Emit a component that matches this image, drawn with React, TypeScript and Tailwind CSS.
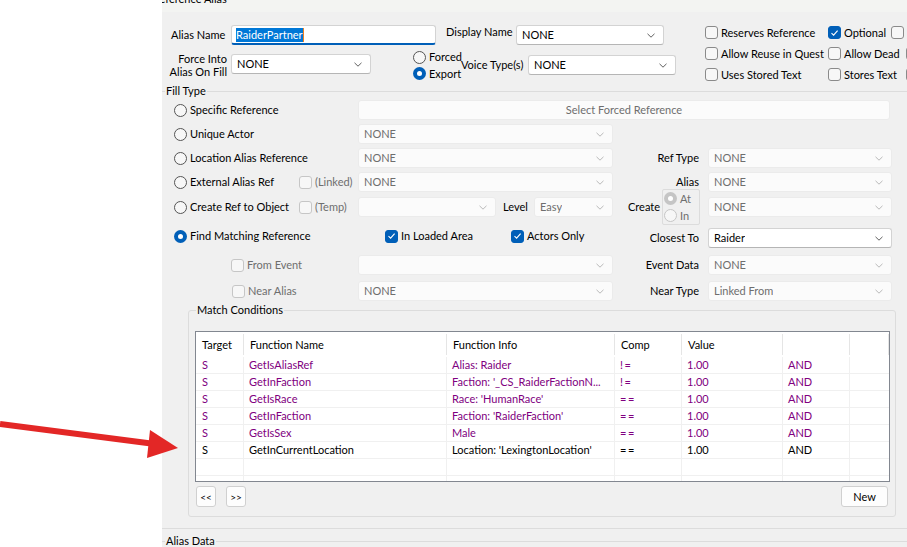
import React from "react";

const Chevron = ({ disabled }: { disabled?: boolean }) => (
  <svg width="8" height="5" viewBox="0 0 8 5" className="shrink-0">
    <path d="M0.5 0.8 L4 4.2 L7.5 0.8" fill="none" stroke={disabled ? "#b9b9b9" : "#606060"} strokeWidth="1" />
  </svg>
);

const Select = ({ value, w, active, h = "h-[20px]" }: { value: string; w: string; active?: boolean; h?: string }) => (
  <div
    className={`${w} ${h} shrink-0 flex items-center justify-between pl-[5px] pr-[8px] rounded-[3px] border ${
      active ? "bg-white border-[#d3d3d3] border-b-[#b5b5b5] text-black" : "bg-[#fbfbfb] border-[#ebebeb] text-[#6e6e6e]"
    }`}
  >
    <span className="truncate">{value}</span>
    <Chevron disabled={!active} />
  </div>
);

const Check = ({ checked, disabled, label }: { checked?: boolean; disabled?: boolean; label: string }) => (
  <div className="flex items-center gap-[3px] shrink-0">
    <div
      className={`w-[13px] h-[13px] shrink-0 rounded-[3px] flex items-center justify-center border ${
        checked ? "bg-[#005fb8] border-[#005fb8]" : disabled ? "bg-[#f7f7f7] border-[#c6c6c6]" : "bg-[#f7f7f7] border-[#8a8a8a]"
      }`}
    >
      {checked && (
        <svg width="9" height="8" viewBox="0 0 9 8">
          <path d="M1.5 4.2 L3.6 6.2 L7.6 1.6" fill="none" stroke="white" strokeWidth="1.1" />
        </svg>
      )}
    </div>
    <span className={`whitespace-nowrap ${disabled ? "text-[#6e6e6e]" : "text-black"}`}>{label}</span>
  </div>
);

const Radio = ({ selected, disabled, label }: { selected?: boolean; disabled?: boolean; label: string }) => (
  <div className="flex items-center gap-[3px] shrink-0">
    <div
      className={`w-[13px] h-[13px] shrink-0 rounded-full flex items-center justify-center ${
        selected
          ? disabled
            ? "bg-[#c5c5c5]"
            : "bg-[#005fb8]"
          : disabled
          ? "border border-[#c6c6c6] bg-[#f7f7f7]"
          : "border border-[#555] bg-[#f7f7f7]"
      }`}
    >
      {selected && <div className="w-[5px] h-[5px] rounded-full bg-white" />}
    </div>
    <span className={`whitespace-nowrap ${disabled ? "text-[#6e6e6e]" : "text-black"}`}>{label}</span>
  </div>
);

const RLabel = ({ text }: { text: string }) => (
  <div className="w-[95px] shrink-0 text-right pr-[9px] whitespace-nowrap">{text}</div>
);

const rows = [
  { t: "S", fn: "GetIsAliasRef", info: "Alias: Raider", comp: "!=", v: "1.00", op: "AND", p: true },
  { t: "S", fn: "GetInFaction", info: "Faction: '_CS_RaiderFactionN...", comp: "!=", v: "1.00", op: "AND", p: true },
  { t: "S", fn: "GetIsRace", info: "Race: 'HumanRace'", comp: "==", v: "1.00", op: "AND", p: true },
  { t: "S", fn: "GetInFaction", info: "Faction: 'RaiderFaction'", comp: "==", v: "1.00", op: "AND", p: true },
  { t: "S", fn: "GetIsSex", info: "Male", comp: "==", v: "1.00", op: "AND", p: true },
  { t: "S", fn: "GetInCurrentLocation", info: "Location: 'LexingtonLocation'", comp: "==", v: "1.00", op: "AND", p: false },
];

const cols = "grid grid-cols-[48px_203px_168px_67px_101px_67px_1fr]";

export default function App() {
  return (
    <div className="relative w-[907px] h-[547px] flex overflow-hidden font-['Lato',sans-serif] text-[11px] leading-[14px] text-black">
      <div className="w-[162px] shrink-0 bg-white" />
      <div className="w-[745px] shrink-0 bg-[#f0f0f0] flex flex-col overflow-hidden">
        {/* top cut title */}
        <div className="h-[12px] shrink-0 overflow-hidden bg-[#f3f4f2]">
          <div className="-mt-[8px] -ml-[9px] whitespace-nowrap">Reference Alias</div>
        </div>

        {/* header section */}
        <div className="h-[72px] shrink-0 flex">
          <div className="w-[538px] shrink-0 flex flex-col">
            <div className="mt-[13px] h-[20px] flex items-center">
              <div className="w-[69px] shrink-0 pl-[9px]">Alias Name</div>
              <div className="w-[205px] h-[20px] shrink-0 bg-white border border-[#d3d3d3] border-b-2 border-b-[#005fb8] rounded-[3px] flex items-center pl-[4px]">
                <span className="bg-[#0078d7] text-white leading-[14px]">RaiderPartner</span>
                <span className="w-[1px] h-[14px] bg-[#f08020]" />
              </div>
              <div className="ml-[10px] w-[70px] shrink-0 self-start whitespace-nowrap">Display Name</div>
              <Select value="NONE" w="w-[148px]" active />
            </div>
            <div className="mt-[4px] h-[32px] flex items-start">
              <div className="w-[65px] shrink-0 text-right pt-[3px] leading-[13px]">
                Force Into
                <br />
                Alias On Fill
              </div>
              <div className="ml-[4px] mt-[5px]">
                <Select value="NONE" w="w-[140px]" active />
              </div>
              <div className="ml-[42px] w-[48px] shrink-0 flex flex-col">
                <div className="h-[16px] flex items-center">
                  <Radio label="Forced" />
                </div>
                <div className="h-[17px] flex items-center">
                  <Radio label="Export" selected />
                </div>
              </div>
              <div className="w-[67px] shrink-0 pt-[9px] whitespace-nowrap">Voice Type(s)</div>
              <div className="mt-[6px]">
                <Select value="NONE" w="w-[148px]" active />
              </div>
            </div>
          </div>
          <div className="ml-[5px] pt-[10px] grid grid-cols-[123px_63px_40px] auto-rows-[21px] items-center">
            <Check label="Reserves Reference" />
            <Check label="Optional" checked />
            <Check label="Essential" />
            <Check label="Allow Reuse in Quest" />
            <Check label="Allow Dead" />
            <div className="ml-[15px]">
              <Check label="Protected" />
            </div>
            <Check label="Uses Stored Text" />
            <Check label="Stores Text" />
            <div className="ml-[15px]">
              <Check label="Quest Object" />
            </div>
          </div>
        </div>

        {/* Fill Type header */}
        <div className="h-[14px] shrink-0 flex items-center">
          <div className="w-[3px] border-t border-[#dcdcdc]" />
          <span className="px-[1px]">Fill Type</span>
          <div className="flex-1 border-t border-[#dcdcdc]" />
        </div>

        {/* Row: Specific Reference */}
        <div className="mt-[2px] h-[20px] shrink-0 flex items-center">
          <div className="w-[196px] shrink-0 pl-[12px]">
            <Radio label="Specific Reference" />
          </div>
          <div className="w-[532px] h-[20px] shrink-0 bg-[#fbfbfb] border border-[#ebebeb] rounded-[3px] flex items-center justify-center text-[#6e6e6e]">
            Select Forced Reference
          </div>
        </div>

        {/* Unique Actor */}
        <div className="mt-[4px] h-[20px] shrink-0 flex items-center">
          <div className="w-[196px] shrink-0 pl-[12px]">
            <Radio label="Unique Actor" />
          </div>
          <Select value="NONE" w="w-[255px]" />
        </div>

        {/* Location Alias Reference */}
        <div className="mt-[4px] h-[20px] shrink-0 flex items-center">
          <div className="w-[196px] shrink-0 pl-[12px]">
            <Radio label="Location Alias Reference" />
          </div>
          <Select value="NONE" w="w-[255px]" />
          <RLabel text="Ref Type" />
          <Select value="NONE" w="w-[184px]" />
        </div>

        {/* External Alias Ref */}
        <div className="mt-[4px] h-[20px] shrink-0 flex items-center">
          <div className="w-[196px] shrink-0 pl-[12px] flex items-center">
            <div className="w-[125px] shrink-0">
              <Radio label="External Alias Ref" />
            </div>
            <Check label="(Linked)" disabled />
          </div>
          <Select value="NONE" w="w-[255px]" />
          <RLabel text="Alias" />
          <Select value="NONE" w="w-[184px]" />
        </div>

        {/* Create Ref to Object */}
        <div className="mt-[5px] h-[20px] shrink-0 flex items-center">
          <div className="w-[196px] shrink-0 pl-[12px] flex items-center">
            <div className="w-[125px] shrink-0">
              <Radio label="Create Ref to Object" />
            </div>
            <Check label="(Temp)" disabled />
          </div>
          <Select value="" w="w-[138px]" />
          <div className="ml-[7px] w-[31px] shrink-0">Level</div>
          <Select value="Easy" w="w-[79px]" />
          <div className="ml-[15px] w-[34px] shrink-0">Create</div>
          <div className="w-[38px] h-[36px] shrink-0 border border-[#dcdcdc] rounded-[2px] flex flex-col justify-center gap-[3px] pl-[1px]">
            <Radio label="At" selected disabled />
            <Radio label="In" disabled />
          </div>
          <div className="ml-[8px]">
            <Select value="NONE" w="w-[184px]" />
          </div>
        </div>

        {/* Find Matching Reference */}
        <div className="mt-[11px] h-[20px] shrink-0 flex items-center">
          <div className="w-[196px] shrink-0 pl-[12px] pb-[4px]">
            <Radio label="Find Matching Reference" selected />
          </div>
          <div className="w-[255px] shrink-0 flex items-center pl-[27px] pb-[4px]">
            <div className="w-[126px] shrink-0">
              <Check label="In Loaded Area" checked />
            </div>
            <Check label="Actors Only" checked />
          </div>
          <RLabel text="Closest To" />
          <Select value="Raider" w="w-[184px]" active />
        </div>

        {/* From Event */}
        <div className="mt-[7px] h-[20px] shrink-0 flex items-center">
          <div className="w-[196px] shrink-0 pl-[69px]">
            <Check label="From Event" disabled />
          </div>
          <Select value="" w="w-[255px]" />
          <RLabel text="Event Data" />
          <Select value="NONE" w="w-[184px]" />
        </div>

        {/* Near Alias */}
        <div className="mt-[6px] h-[20px] shrink-0 flex items-center">
          <div className="w-[196px] shrink-0 pl-[70px]">
            <Check label="Near Alias" disabled />
          </div>
          <Select value="NONE" w="w-[255px]" />
          <RLabel text="Near Type" />
          <Select value="Linked From" w="w-[184px]" />
        </div>

        {/* Match Conditions */}
        <div className="relative ml-[26px] mt-[9px] w-[708px] h-[207px] shrink-0 border border-[#dcdcdc] rounded-[3px] pl-[6px] pr-[5px] pt-[20px] flex flex-col">
          <span className="absolute left-[7px] -top-[8px] bg-[#f0f0f0] px-[1px]">Match Conditions</span>
          <div className="h-[151px] shrink-0 border border-[#828790] bg-white flex flex-col overflow-hidden">
            <div className={`${cols} h-[25px] shrink-0`}>
              {["Target", "Function Name", "Function Info", "Comp", "Value", "", ""].map((h, i) => (
                <div key={i} className="flex items-center pl-[6px] border-r border-[#e5e5e5] my-[2px]">
                  {h}
                </div>
              ))}
            </div>
            {rows.map((r, i) => (
              <div key={i} className={`${cols} h-[17px] shrink-0 border-b border-[#f0f0f0] ${r.p ? "text-[#800080]" : "text-black"}`}>
                <div className="pl-[6px] border-r border-[#f0f0f0] flex items-center">{r.t}</div>
                <div className="pl-[5px] border-r border-[#f0f0f0] flex items-center whitespace-nowrap">{r.fn}</div>
                <div className="pl-[5px] border-r border-[#f0f0f0] flex items-center whitespace-nowrap overflow-hidden">{r.info}</div>
                <div className="pl-[5px] border-r border-[#f0f0f0] flex items-center tracking-[1.5px]">{r.comp}</div>
                <div className="pl-[5px] border-r border-[#f0f0f0] flex items-center">{r.v}</div>
                <div className="pl-[5px] border-r border-[#f0f0f0] flex items-center">{r.op}</div>
                <div />
              </div>
            ))}
            {[0, 1].map((i) => (
              <div key={"e" + i} className={`${cols} h-[17px] shrink-0 border-b border-[#f0f0f0]`}>
                {[0, 1, 2, 3, 4, 5].map((j) => (
                  <div key={j} className="border-r border-[#f0f0f0]" />
                ))}
                <div />
              </div>
            ))}
          </div>
          <div className="mt-[4px] h-[21px] shrink-0 flex items-center">
            <div className="ml-[1px] w-[20px] h-[21px] bg-[#fdfdfd] border border-[#d0d0d0] rounded-[3px] flex items-center justify-center text-[10px]">
              &lt;&lt;
            </div>
            <div className="ml-[10px] w-[20px] h-[21px] bg-[#fdfdfd] border border-[#d0d0d0] rounded-[3px] flex items-center justify-center text-[10px]">
              &gt;&gt;
            </div>
            <div className="ml-auto mr-[2px] w-[47px] h-[21px] bg-[#fdfdfd] border border-[#d0d0d0] rounded-[3px] flex items-center justify-center">
              New
            </div>
          </div>
        </div>

        <div className="mt-[11px] shrink-0 border-t border-[#dcdcdc]" />
        <div className="mt-[5px] h-[14px] shrink-0 flex items-center">
          <div className="w-[3px] border-t border-[#dcdcdc]" />
          <span className="px-[1px]">Alias Data</span>
          <div className="flex-1 border-t border-[#dcdcdc]" />
        </div>
      </div>

      {/* red arrow annotation */}
      <svg className="absolute left-0 top-0 pointer-events-none" width="200" height="547" viewBox="0 0 200 547">
        <line x1="0" y1="424" x2="155" y2="444" stroke="#e32726" strokeWidth="6" />
        <polygon points="178,448 150,430 147,458" fill="#e32726" />
      </svg>
    </div>
  );
}
